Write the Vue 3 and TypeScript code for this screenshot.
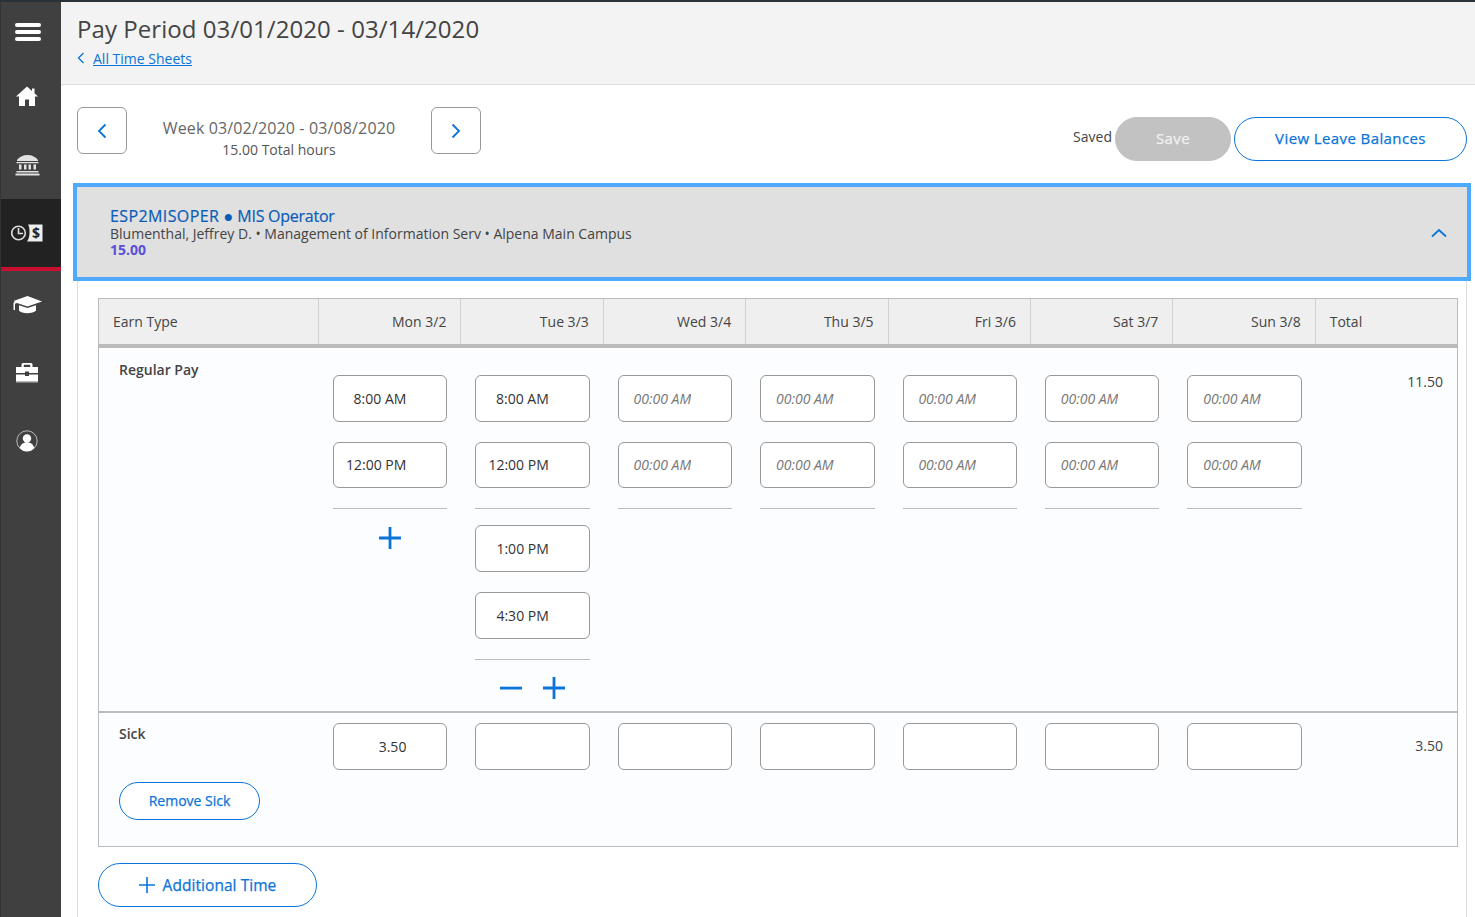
<script setup lang="ts">
interface Day { label: string; first: string[]; extra: string[]; sick: string }
const ph = '00:00 AM'
const days: Day[] = [
  { label: 'Mon 3/2', first: ['8:00 AM', '12:00 PM'], extra: [], sick: '3.50' },
  { label: 'Tue 3/3', first: ['8:00 AM', '12:00 PM'], extra: ['1:00 PM', '4:30 PM'], sick: '' },
  { label: 'Wed 3/4', first: ['', ''], extra: [], sick: '' },
  { label: 'Thu 3/5', first: ['', ''], extra: [], sick: '' },
  { label: 'Fri 3/6', first: ['', ''], extra: [], sick: '' },
  { label: 'Sat 3/7', first: ['', ''], extra: [], sick: '' },
  { label: 'Sun 3/8', first: ['', ''], extra: [], sick: '' },
]
const canAdd = (i: number) => i < 2
</script>

<template>
  <div class="app">
    <div class="topline"></div>
    <div class="shell">
      <nav class="side">
        <div class="burger"><span></span><span></span><span></span></div>
        <div class="item">
          <svg class="home" width="24" height="24" viewBox="0 0 24 24"><path fill="#fff" d="M12 2.500 1 12.500h3V22h6v-6.500h4V22h6v-9.500h3l-3.500-3.200V4.500h-2.500v2.500z"/></svg>
        </div>
        <div class="item">
          <svg width="25" height="22" viewBox="0 0 25 22"><path fill="#e2e2e2" d="M12.500 1C17 1 21 3 23 6v1H2V6c2-3 6-5 10.500-5zM1.500 8h22v1.300h-22zM4 10.500h2.500v5H4zM9 10.500h2.500v5H9zM13.500 10.500H16v5h-2.500zM18.500 10.500H21v5h-2.500zM1.500 17h22v1.500h-22zM.5 19.500h24V21.500H.5z"/></svg>
        </div>
        <div class="item active">
          <svg width="32" height="20" viewBox="0 0 32 20">
            <circle cx="7.500" cy="10" r="6.800" fill="none" stroke="#ddd" stroke-width="1.600"/>
            <path fill="none" stroke="#ddd" stroke-width="1.600" d="M7.500 5v5.500H12"/>
            <path fill="#eee" d="M17 1.500h14.500v17H16c1.600-2 2.500-5 2.500-8.500S18.500 3.500 17 1.500z"/>
            <text x="25" y="15" text-anchor="middle" class="dollar">$</text>
          </svg>
        </div>
        <div class="redbar"></div>
        <div class="item">
          <svg width="30" height="20" viewBox="0 0 30 20"><path fill="#fff" d="M15.500 1 30 6.500 15.500 11.500 5 8 3 8.800v6.200H1.500V8C3 7 3 6.500 1.500 6z"/><path fill="#fff" d="M7 10.200v5.300c2.500 3.500 14 3.500 17 0v-5.300l-8.500 2.900z"/></svg>
        </div>
        <div class="item">
          <svg width="24" height="20" viewBox="0 0 24 20"><path fill="#fff" d="M8 0h8a1.500 1.500 0 0 1 1.500 1.500V4H23v6H14V8.500h-4V10H1V4h5.500V1.500A1.500 1.500 0 0 1 8 0zm.800 1.800V4h6.400V1.800z"/><path fill="#fff" d="M1 11.500h9V13h4v-1.500h9V18H1z"/><path fill="#bbb" d="M1 18h22v1.500H1z"/></svg>
        </div>
        <div class="item">
          <svg width="22" height="22" viewBox="0 0 22 22"><circle cx="11" cy="11" r="10.200" fill="none" stroke="#bbb" stroke-width="1"/><circle cx="11" cy="8.500" r="4.200" fill="#fff"/><path fill="#fff" d="M3.800 18.300c.5-4 4-6 7.200-6s6.700 2 7.200 6a10 10 0 0 1-14.400 0z"/></svg>
        </div>
      </nav>

      <main class="main">
        <header class="head">
          <h1 class="title">Pay Period 03/01/2020 - 03/14/2020</h1>
          <div class="crumb">
            <svg width="8" height="12" viewBox="0 0 8 12"><path fill="none" stroke="#0a74da" stroke-width="1.300" d="M6.500 1 1.500 6l5 5"/></svg>
            <a class="link">All Time Sheets</a>
          </div>
        </header>

        <section class="weekbar">
          <button class="navbtn">
            <svg width="10" height="16" viewBox="0 0 10 16"><path fill="none" stroke="#0a74da" stroke-width="1.800" d="M8.500 1.500 2 8l6.500 6.500"/></svg>
          </button>
          <div class="week">
            <div class="week-name">Week 03/02/2020 - 03/08/2020</div>
            <div class="week-total">15.00 Total hours</div>
          </div>
          <button class="navbtn">
            <svg width="10" height="16" viewBox="0 0 10 16"><path fill="none" stroke="#0a74da" stroke-width="1.800" d="M1.500 1.500 8 8l-6.500 6.500"/></svg>
          </button>
          <div class="actions">
            <span class="saved">Saved</span>
            <button class="pill save">Save</button>
            <button class="pill view">View Leave Balances</button>
          </div>
        </section>

        <section class="panel">
          <div class="card">
            <div>
              <div class="card-title"><span class="code">ESP2MISOPER</span> ● <span class="job">MIS Operator</span></div>
              <div class="card-sub">Blumenthal, Jeffrey D. • Management of Information Serv • Alpena Main Campus</div>
              <div class="card-hours">15.00</div>
            </div>
            <svg class="caret" width="16" height="10" viewBox="0 0 16 10"><path fill="none" stroke="#0a74da" stroke-width="1.800" d="M1 8.500 8 2l7 6.500"/></svg>
          </div>

          <div class="sheet">
            <div class="row thead">
              <div class="th">Earn Type</div>
              <div v-for="d in days" :key="d.label" class="th right">{{ d.label }}</div>
              <div class="th last">Total</div>
            </div>

            <div class="row regular">
              <div class="label pay">Regular Pay</div>
              <div v-for="(d, i) in days" :key="d.label" class="cell">
                <input v-for="(v, k) in d.first" :key="k" class="time first" :value="v" :placeholder="ph" />
                <div class="rule"></div>
                <input v-for="(v, k) in d.extra" :key="k" class="time" :value="v" />
                <div v-if="d.extra.length" class="rule"></div>
                <div v-if="canAdd(i)" class="tools" :class="{ spaced: d.extra.length }">
                  <svg v-if="d.extra.length" width="24" height="24" viewBox="0 0 24 24"><path fill="#0a74da" d="M1 10.700h22v2.800H1z"/></svg>
                  <svg width="24" height="24" viewBox="0 0 24 24"><path fill="#0a74da" d="M10.600 1h2.800v9.600H23v2.800h-9.600V23h-2.800v-9.600H1v-2.800h9.600z"/></svg>
                </div>
              </div>
              <div class="sum sum-a">11.50</div>
            </div>

            <div class="row sick">
              <div class="label">
                <div class="sick-name">Sick</div>
                <button class="pill remove">Remove Sick</button>
              </div>
              <div v-for="d in days" :key="d.label" class="cell sick-cell">
                <input class="time" :value="d.sick" />
              </div>
              <div class="sum sum-b">3.50</div>
            </div>
          </div>

          <button class="pill additional">
            <svg width="16" height="16" viewBox="0 0 16 16"><path fill="#0a74da" d="M7.200 0h1.600v7.200H16v1.600H8.800V16H7.200V8.800H0V7.200h7.200z"/></svg>
            Additional Time
          </button>
        </section>
      </main>
    </div>
  </div>
</template>

<style>
html, body { margin: 0; background: #fff; }
</style>

<style scoped>
.app { width: 1475px; height: 917px; overflow: hidden; font-family: "Open Sans", "Noto Sans", sans-serif; color: #444; font-size: 14px; display: flex; flex-direction: column; }
.topline { height: 2px; background: #2b3138; flex: none; }
.shell { flex: 1; display: flex; min-height: 0; }
.side { width: 61px; flex: none; box-sizing: border-box; background: #404040; display: flex; flex-direction: column; border-left: 1px solid #333; }
.burger { height: 60px; padding: 0 6px 1px 0; display: flex; flex-direction: column; align-items: center; justify-content: center; gap: 3px; }
.burger span { width: 26px; height: 4px; border-radius: 2px; background: #fff; }
.item { height: 68px; padding-right: 8px; display: flex; align-items: center; justify-content: center; }
.item.active { background: #222; }
.home { margin-top: -2px; }
.redbar { height: 4px; background: #c8102e; }
.dollar { font: 700 14px "Open Sans", sans-serif; fill: #222; }
.main { flex: 1; min-width: 0; display: flex; flex-direction: column; }
.head { height: 83px; box-sizing: border-box; background: #f3f3f3; border-bottom: 1px solid #ddd; padding: 9px 16px 0; }
.title { margin: 0; font: 400 24px/36px "Open Sans", sans-serif; color: #444; letter-spacing: .06px; }
.crumb { display: flex; align-items: center; gap: 8px; margin-top: 1px; height: 20px; }
.link { color: #0a74da; text-decoration: underline; font-size: 14px; }
.weekbar { display: flex; align-items: flex-start; padding: 22px 8px 0 16px; height: 76px; }
.navbtn { width: 50px; height: 47px; background: #fff; border: 1px solid #999; border-radius: 6px; display: flex; align-items: center; justify-content: center; padding: 0; }
.week { width: 304px; text-align: center; }
.week-name { font-size: 16px; line-height: 22px; margin-top: 10px; color: #666; letter-spacing: .14px; }
.week-total { font-size: 14px; line-height: 20px; margin-top: 1px; color: #555; }
.actions { margin-left: auto; display: flex; align-items: center; gap: 3px; margin-top: 10px; }
.saved { margin-left: 1px; font-size: 14px; margin-top: -6px; }
.pill { border-radius: 22px; background: #fff; border: 1px solid #0a74da; color: #0a74da; font-family: "Open Sans", sans-serif; padding: 0; -webkit-text-stroke: .25px currentColor; }
.save { width: 116px; height: 44px; padding-bottom: 2px; background: #c2c2c2; border-color: #c2c2c2; color: #f2f2f2; font-size: 15px; letter-spacing: .35px; }
.view { width: 233px; height: 44px; padding-bottom: 2px; font-size: 15px; letter-spacing: .4px; }
.panel { flex: 1; margin: 0 8px 0 16px; border-left: 1px solid #ddd; border-right: 1px solid #ddd; padding: 0 8px 0 20px; min-height: 0; }
.card { margin: 0 -13px 17px -25px; height: 98px; box-sizing: border-box; border: 4px solid #4faaff; background: #e0e0e0; padding: 0 20px 0 33px; display: flex; align-items: center; justify-content: space-between; }
.card-title { font-size: 16px; line-height: 18px; color: #0b5cb8; -webkit-text-stroke: .2px currentColor; }
.code { letter-spacing: .4px; }
.job { letter-spacing: -.25px; }
.card-sub { font-size: 14px; line-height: 17px; color: #444; }
.card-hours { font-size: 14px; line-height: 16px; font-weight: 700; color: #5a50d8; }
.caret { margin-top: 2px; }
.sheet { border: 1px solid #bbb; background: #fcfdff; }
.row { display: grid; grid-template-columns: 220px repeat(7, 142.4px) 1fr; }
.thead { height: 45px; background: #efefef; border-bottom: 4px solid #bbb; }
.th { padding: 0 14px; line-height: 45px; border-right: 1px solid #d2d2d2; font-size: 14px; }
.th.right { text-align: right; }
.th.last { border-right: 0; }
.regular { height: 363px; }
.label { padding: 12px 0 0 20px; font-weight: 600; }
.cell { padding: 27px 14px 0; display: flex; flex-direction: column; align-items: stretch; }
.time { box-sizing: border-box; width: 100%; height: 47px; flex: none; margin-bottom: 20px; border: 1px solid #999; border-radius: 6px; background: #fff; padding: 0 40px 0 0; text-align: right; font: 400 14px "Open Sans", sans-serif; color: #333; outline: none; }
.time.first:nth-of-type(2) { height: 46px; padding-bottom: 2px; }
.time::placeholder { color: #777; font-style: italic; opacity: 1; }
.rule { height: 1px; background: #bbb; margin-bottom: 16px; flex: none; }
.tools { display: flex; justify-content: center; align-items: center; margin-top: 1px; }
.tools.spaced { gap: 19px; margin-top: 0; }
.sum { text-align: right; padding: 0 14px; }
.sum-a { padding-top: 24px; }
.sum-b { padding-top: 23px; }
.sick { height: 135px; border-top: 2px solid #bbb; box-sizing: border-box; }
.sick .label { padding-top: 11px; }
.sick-name { line-height: 20px; }
.sick-cell { padding-top: 10px; }
.remove { display: block; width: 141px; height: 38px; margin-top: 38px; padding-bottom: 2px; font-size: 14px; }
.additional { margin-top: 16px; width: 219px; height: 44px; font-size: 15.500px; letter-spacing: .05px; display: flex; align-items: center; justify-content: center; gap: 8px; }
</style>
